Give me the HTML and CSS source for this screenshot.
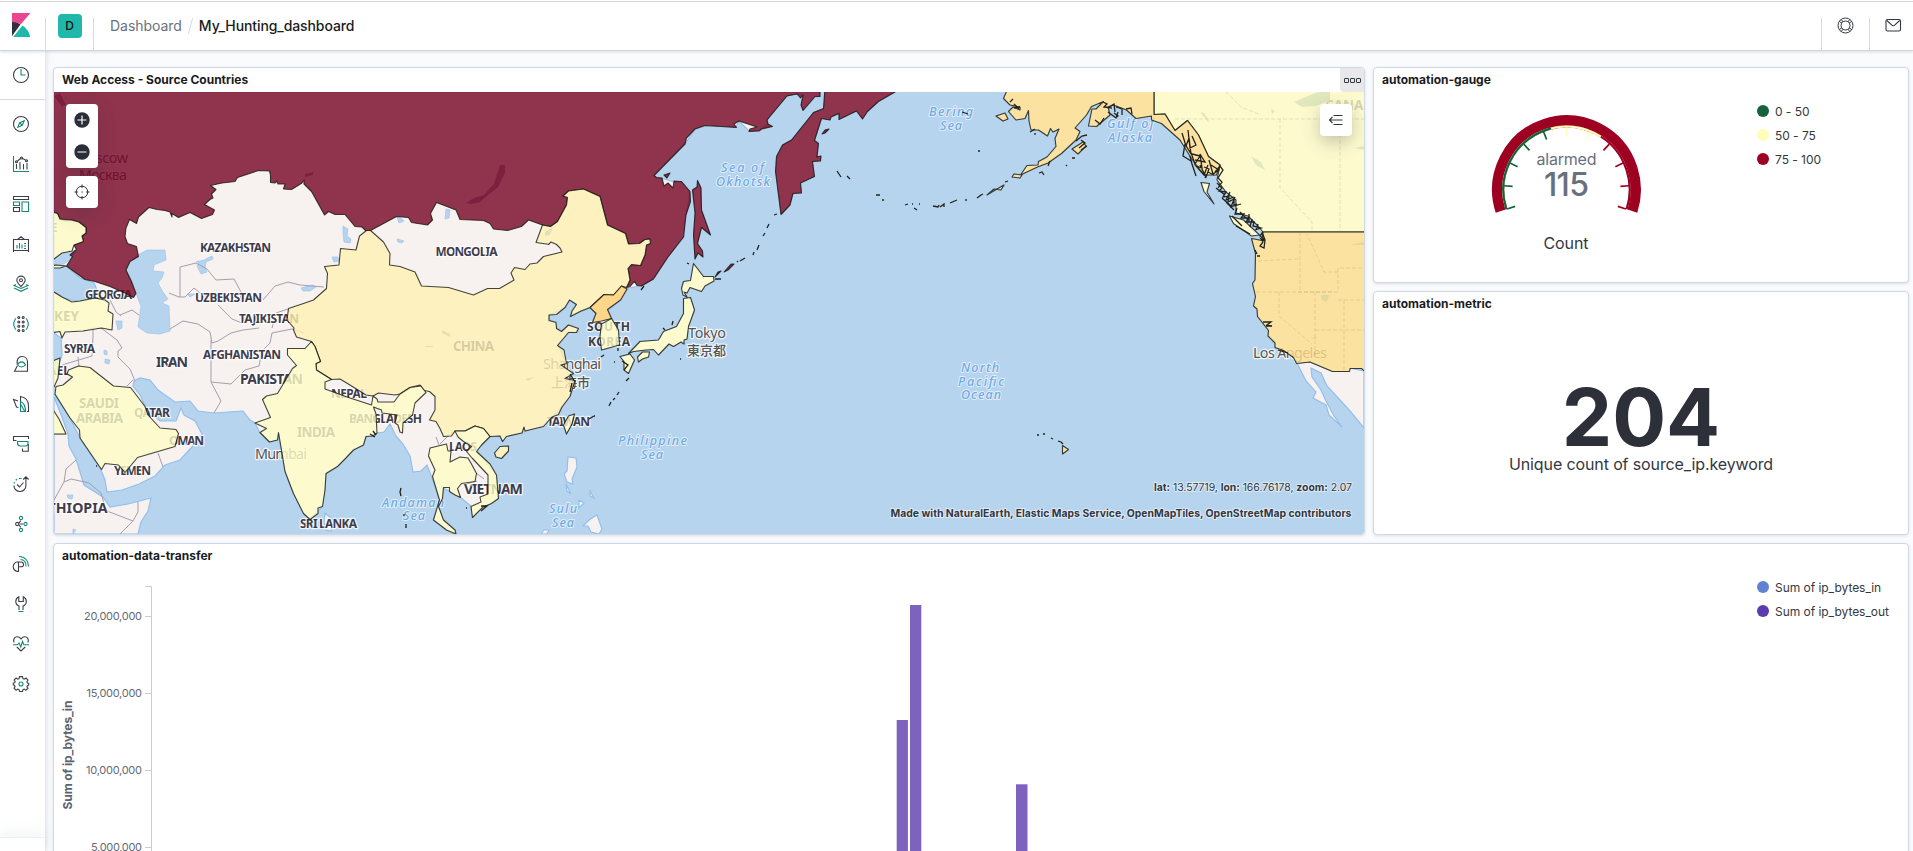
FILE: index.html
```html
<!DOCTYPE html>
<html lang="en">
<head>
<meta charset="utf-8">
<title>My_Hunting_dashboard</title>
<link rel="stylesheet" href="styles.css">
</head>
<body>
<header class="header">
  <div class="brand">
    <svg class="brand-logo" width="18" height="24" viewBox="0 0 18 24"><path fill="#2f313b" d="M0 8.500v14.500L8.500 11.500C6 9.600 3 8.500 0 8.500z"/><path fill="#e9478f" d="M0 0v9c3.200 0 6 .8 8.800 2.200L18.400 0z"/><path fill="#20b8aa" d="M10.400 12.600L1.200 24h17c-.8-4.600-3.600-8.800-7.800-11.400z"/></svg>
  </div>
  <div class="space"><span class="avatar">D</span></div>
  <nav class="crumbs"><a>Dashboard</a><i></i><b>My_Hunting_dashboard</b></nav>
  <div class="tools">
    <span class="tool"><svg width="17" height="17" viewBox="0 0 17 17" fill="none" stroke="#343741"><circle cx="8.500" cy="8.500" r="7.500"/><circle cx="8.500" cy="8.500" r="4.500"/><path d="M2.300 4.500l2.700 1.700M4.200 2.400l1.900 2.500M14.700 4.500L12 6.200M12.800 2.400l-1.900 2.500M2.300 12.500L5 10.800M4.200 14.600l1.900-2.500M14.700 12.500L12 10.800M12.800 14.600l-1.900-2.500"/></svg></span>
    <span class="tool"><svg width="17" height="17" viewBox="0 0 17 17" fill="none" stroke="#343741" stroke-width="1.100"><rect x="1" y="2.500" width="14.500" height="11.500" rx="1.500"/><path d="M1.800 3.500l5.400 4.800c.7.600 1.500.6 2.200 0L14.700 3.500"/></svg></span>
  </div>
</header>
<div class="shell">
  <aside class="side">
    <div class="side-recent"><svg class="ico" viewBox="0 0 16 16"><circle cx="8" cy="8" r="7.500"/><path class="g" d="M8 2v6h4.500"/></svg></div>
    <div class="side-list">
      <svg class="ico" viewBox="0 0 16 16"><circle cx="8" cy="8" r="7.500"/><path class="g" d="M11.200 4.800L9.300 9.300 4.800 11.200 6.700 6.700zM7 7l2 2"/></svg>
      <svg class="ico" viewBox="0 0 16 16"><path class="g" d="M.5 0v15.500H16"/><path d="M3.500 8v5M7 6v7.500M10.500 8v5.500M14 7v6.500M4.500 5l3-2.500M9.500 2.500l3 1.500"/><circle cx="3.500" cy="5.800" r="1"/><circle cx="8.500" cy="2" r="1"/><circle cx="13.500" cy="4.700" r="1"/></svg>
      <svg class="ico" viewBox="0 0 16 16"><path d="M.5.500h15v3H.5zM.5 11.500h6v4h-6z"/><path class="g" d="M.5 6h6v3.500h-6zM9 6h6.500v9.500H9z"/></svg>
      <svg class="ico" viewBox="0 0 16 16"><path d="M.5 3.500h15v11H.5zM4.500 3.500L8 .8l3.500 2.700M.5 14.500v1.500M15.500 14.500V16"/><path class="g" d="M4 9v3.500M6.500 7v5.500M9 8.500v4M11 7.500h2M11 10h2M11 12.500h2"/></svg>
      <svg class="ico" viewBox="0 0 16 16"><path d="M8 10.500C5.500 8 3.800 6.300 3.800 4.300a4.200 4.200 0 018.400 0c0 2-1.700 3.700-4.200 6.200z"/><circle cx="8" cy="4.300" r="1.500"/><path class="g" d="M3 8.500l-2 .9 7 3 7-3-2-.9M1 12l7 3.300L15 12"/></svg>
      <svg class="ico" viewBox="0 0 16 16"><circle cx="5.800" cy="1.500" r="1"/><circle cx="10.200" cy="1.500" r="1"/><circle cx="5.800" cy="6" r="1"/><circle cx="10.200" cy="6" r="1"/><circle cx="5.800" cy="10.200" r="1"/><circle cx="10.200" cy="10.200" r="1"/><circle cx="5.800" cy="14.500" r="1"/><circle cx="10.200" cy="14.500" r="1"/><path class="g" d="M3 2.500C1.500 3 2 5 .8 6.500v3c1.200 1.500.7 3.500 2.200 4M13 2.500c1.500.5 1 2.500 2.200 4v3c-1.200 1.500-.7 3.500-2.200 4"/></svg>
      <svg class="ico" viewBox="0 0 16 16"><path d="M4.200 8.500C3.400 3.500 5.500.5 9 .5c3.300 0 5.500 2.300 5.500 5.500v9.300H1.500l2.900-5.500"/><path class="g" d="M4.500 9c2-4.200 6-4.200 8 0-2.400 2.600-5.600 2.600-8 0z"/></svg>
      <svg class="ico" viewBox="0 0 16 16"><path d="M5.500 11.500L3.500 11 .5 3.500 5 5M7.500 5V.5c5 1 8 4.500 8 9v6H14"/><path class="g" d="M7.500 15.500V5.500c2.500 1 5 4 5 10z M7.500 8l4 7"/></svg>
      <svg class="ico" viewBox="0 0 16 16"><path d="M.5 5V.5h15V3M9.500 12.500v2.800h5.800V8M.5 4.500h3"/><path class="g" d="M4.500 5.500h10.500v2c0 1.500-1 2.500-2.500 2.500h-5c-2 0-3-1.500-3-3z"/></svg>
      <svg class="ico" viewBox="0 0 16 16"><path d="M12.900 1v8.500a5.900 5.900 0 01-12 0M10.200 3.500L12.900.8l2.700 2.700M4 8.500L6.500 11l4-4.500"/><path class="g" d="M1 7.500l.5-1.500M2.700 4.200L4 3.200M6 2.500h2.500"/></svg>
      <svg class="ico" viewBox="0 0 16 16"><circle cx="4.200" cy="8" r="1.600"/><path d="M6 7l1.800-2.300M6 9l1.800 2.300M6.500 8h3.500"/><circle class="g" cx="8" cy="2" r="1.600"/><circle class="g" cx="12.500" cy="8" r="1.600"/><circle class="g" cx="8" cy="14" r="1.600"/></svg>
      <svg class="ico" viewBox="0 0 16 16"><path d="M5.200 5.700a4.900 4.900 0 00-.2 9.800h.5V6h2.600a2.400 2.400 0 010 4.800H5.500"/><path class="g" d="M7.500 3.500c3.500 0 5.500 3 5.500 7M6 .5c6 0 9.500 4 9.500 10"/></svg>
      <svg class="ico" viewBox="0 0 16 16"><path d="M6 14V10C4 9.300 2.800 7.500 2.800 5.500c0-2 1-3.800 3-4.700V5.500h4.500V.8c2 .9 3 2.700 3 4.700 0 2-1.300 3.800-3.300 4.500v4"/><path class="g" d="M5.500 15.500h5"/></svg>
      <svg class="ico" viewBox="0 0 16 16"><path d="M1 6.500C-.2 2.500 2 .8 4.200.8 6 .8 7.200 1.800 8 3c.8-1.200 2-2.200 3.800-2.200C14 .8 16.200 2.500 15 6.500M3.800 11L8 15l4.200-4"/><path class="g" d="M0 8.800h4.500L6 7l1.800 4L9.500 5.500l1.300 3.300H16"/></svg>
      <svg class="ico" viewBox="0 0 16 16"><path d="M6.500.6h3l.4 2 1.400.6L13 2l2 2.100-1.100 1.600.6 1.300 1.200.2v2l-1.200.2-.6 1.500L15 12.200 12.900 14.200l-1.600-1.100-1.400.6-.4 1.800h-3l-.4-1.800-1.400-.6-1.600 1.100L1 12.200l1.100-1.500-.6-1.400L.3 9V7l1.300-.2.600-1.300L1 4.100 3.100 2l1.600 1.200 1.400-.6z"/><circle class="g" cx="8" cy="8" r="2"/></svg>
    </div>
    <div class="side-foot"></div>
  </aside>
  <main class="grid">
    <section class="panel panel-map">
      <h2>Web Access - Source Countries</h2>
      <button class="panel-menu"><i></i><i></i><i></i></button>
      <div class="map">
        <svg class="map-svg" viewBox="54 92 1310 442" preserveAspectRatio="none">
          <rect x="54" y="92" width="1310" height="442" fill="#b6d4ee"/>
          <!-- base land -->
          <g class="land">
            <path d="M54 92H820V97L815 97 804 110 801 105 803 95 797 94 787 96 767 120 768 124 760 130 749 131 739 121 736 127 705 126 695 129 685 144 654 176 674 182 682 182 690 192 686 215 684 237 668 257 653 279 641 286 628 288 621 300 608 310 612 318 618 330 619 345 602 350 600 336 601 324 592 322 596 313 590 308 570 316 576 305 570 300 565 308 549 315 549 320 556 322 557 328 562 331 568 325 578 328 576 332 568 332 558 345 566 363 574 374 566 379 575 381 570 396 558 411 543 426 523 432 506 436 503 442 500 436 490 437 482 445 477 451 496 475 498 498 491 504 483 507 472 517 471 506 460 497 449 491 443 488 442 499 439 507 443 520 455 530 455 534 446 530 433 520 439 500 437 493 432 478 427 465 421 471 413 472 410 456 403 444 396 436 390 424 384 432 377 433 366 437 363 445 353 450 337 467 326 474 325 490 322 507 310 519 303 513 293 493 285 471 281 450 278 433 277 440 269 442 260 433 255 423 250 420 243 411 214 413 198 411 190 401 175 402 158 390 150 380 140 378 134 381 133 386 140 395 147 410 160 421 176 421 181 408 184 415 195 421 202 434 191 448 180 460 165 465 155 476 139 484 122 490 107 492 105 480 101 470 80 438 70 418 54 394V372L57 370 62 355 61 338 54 333V292L64 298 80 302 92 298 97 290 94 283 80 278 66 266 54 264z"/>
            <path d="M54 397L62 417 68 434 69 446 76 459 84 485 95 492 103 497 110 507 128 504 151 498 148 511 141 522 138 534H54z"/>
            <path d="M1297 363L1310 362 1332 371H1349V368L1364 371V428L1350 411 1340 400 1327 386 1321 373 1311 368 1312 377 1321 390 1326 401 1334 416 1342 427 1329 415 1326 405 1313 398 1316 392 1306 381z"/>
            <path d="M325 513l8 7-2 11-5-1-2-8zM568 457l8 1 1 9-5 12 1 5-6-2-3-8 3-3zM589 520l8-5 5 14-3 5-8-2-3-6h-5zM544 530l5 0-2 4-6 0zM566 484l5 10-4-3zM579 500l5 3-5 5zM590 491l4 7-4-2z"/>
            <use href="#kamchatka"/><use href="#japan"/><use href="#canada"/><use href="#usa"/><use href="#alaska"/><use href="#taiwan"/><use href="#hainan"/>
          </g>
          <g fill="#b6d4ee" stroke="#93bfee" stroke-width=".6">
            <path d="M138 255L147 250 165 250 166 260 154 265 153 271 164 272 162 278 158 283 163 292 168 299 162 303 169 306 170 331 160 334 147 333 138 327 141 306 138 299 136 293 126 270 130 262z"/>
            <path d="M55 258L60 254 72 251 76 250 72 258 64 264 56 265z"/>
            <path d="M343 226l5 3-1 7 4 3-1 4-6-1-1-9zM332 257l6 0 1 4-5 1zM196 262l8-2 8-4 1 3-7 3-1 6 2 4-6 2-4-8 2-5zM187 294l8 0-5 3zM301 288l12-3 3 2-6 4-7 0zM116 321l6 0 0 7-4 2zM104 350l3 1 0 4-3-1zM105 359l5 1-1 4-4-1zM397 239l7 2-2 2-4-1zM397 217l3 0 4 4-5 2zM446 209l4 1-1 8-4 1zM67 495l6 0-1 4-4-1zM73 529l3 1-3 4z"/>
          </g>
          <g fill="#9a84a6" opacity=".9"><path d="M500 165h5l0 8-7 14-10 8-8 7-9 2-5-1 8-5 10-3 10-11zM54 96l6-3 6 12-4 2zM305 174l8-2 0 3-8 2z"/></g>
          <!-- administrative borders -->
          <g fill="none" stroke="#a39eae" stroke-width="1">
            <path d="M180 297V267L196 263 207 269 216 280 234 279 241 292 240 301M169 293l10 4h6l9-9 10 8 14 0M263 300l12-14 13-4 12 3 24 2M170 329l13-8 15 3 12 8 2 11 6-2 13-8 12-3 16-2M211 340v42l10 19-7 12M211 382l20 2 14-14 14-4 3-15 8-8 2-10 20-4 12 4M83 331l10-3 0 8-1 20-30 9M79 366l-1-9M95 328l6 0 16 12 5 8-4 3 0 6 12 12 5 12M127 386l6-6M158 453l5 14M54 434h12M64 482l7-3 18 4 12 10M54 500l10-18 2-13 10-9M101 493l4 14 2 4 26 10-13 13M138 502v10l-5 9M110 300l6 12 5 4M120 315l12-5 7 5M218 305l14 14 10 4M272 328l4-15 12-4 6 10"/>
            <path d="M436 437l3 8M440 444l10-10 4-2M463 485l14-4M476 473l8 6" />
          </g>
          <g class="map-labels">
            <g class="country">
              <text x="200" y="252" textLength="71">KAZAKHSTAN</text><text x="85" y="299" textLength="47">GEORGIA</text><text x="195" y="302" textLength="67">UZBEKISTAN</text><text x="239" y="323" textLength="60">TAJIKISTAN</text>
              <text x="64" y="352.500" textLength="31">SYRIA</text><text class="lg" x="156" y="367" textLength="32">IRAN</text><text x="203" y="359" textLength="78">AFGHANISTAN</text><text class="lg" x="240" y="383.500" textLength="63">PAKISTAN</text><text x="331" y="398" textLength="36">NEPAL</text>
              <text class="md" x="79" y="407.500" textLength="40">SAUDI</text><text class="md" x="76" y="423" textLength="47">ARABIA</text><text x="134" y="417" textLength="36">QATAR</text><text x="169" y="445" textLength="35">OMAN</text><text x="114" y="474.500" textLength="37">YEMEN</text>
              <text class="md" x="297" y="437" textLength="38">INDIA</text><text x="349" y="422.500" textLength="73">BANGLADESH</text><text class="lg" x="107.500" y="512.500" text-anchor="end">ETHIOPIA</text><text x="300" y="528" textLength="57">SRI LANKA</text><text class="md" x="79" y="321" text-anchor="end">TURKEY</text><text x="70" y="374.500" text-anchor="end">ISRAEL</text><text x="57.500" y="232" text-anchor="end">UKRAINE</text>
              <text class="md" x="453" y="350.500" textLength="41">CHINA</text><text x="435.500" y="256" textLength="62">MONGOLIA</text><text x="587" y="330.500" textLength="43">SOUTH</text><text x="588" y="346" textLength="42">KOREA</text><text x="547" y="425.500" textLength="43">TAIWAN</text><text x="449" y="451" textLength="28">LAOS</text><text class="lg" x="464" y="494" textLength="59">VIETNAM</text><text class="md" x="1325" y="110">CANADA</text>
            </g>
            <g class="city">
              <text x="75" y="163" textLength="53">Moscow</text><text x="79" y="180" textLength="48">Москва</text><text x="255" y="459" textLength="52">Mumbai</text><text x="543" y="369" textLength="58">Shanghai</text><text class="cjk" x="551" y="387" textLength="39">上海市</text><text x="688" y="337.500" textLength="38">Tokyo</text><text class="cjk" x="687" y="355" textLength="39">東京都</text><text x="1253" y="358" textLength="74">Los Angeles</text>
            </g>
            <g class="sea">
              <text x="721" y="172" textLength="43">Sea of</text><text x="716" y="185.500" textLength="54">Okhotsk</text><text x="618" y="445" textLength="69">Philippine</text><text x="641" y="458.500" textLength="22">Sea</text><text x="549" y="512.500" textLength="28">Sulu</text><text x="552" y="526.500" textLength="22">Sea</text><text x="382" y="506.500" textLength="62">Andaman</text><text x="403" y="520" textLength="22">Sea</text><text x="929" y="116" textLength="44">Bering</text><text x="940" y="129.500" textLength="22">Sea</text><text x="1107" y="127.500" textLength="47">Gulf of</text><text x="1108" y="141.500" textLength="44">Alaska</text><text x="961" y="371.500" textLength="38">North</text><text x="958" y="385.500" textLength="46">Pacific</text><text x="961" y="399" textLength="40">Ocean</text>
            </g>
          </g>
          <!-- choropleth layer -->
          <g class="fill">
            <g fill="#760324">
              <path d="M50 88H820V96.500L815 96.500 803 110.500 801 105 803 95 800.500 98 797 94 787 96 767 120 768 124 772.500 126.500 761.700 129 759 131 749 131.500 750 129 757 127 739 121 734 124 736.500 127.500 705 125.500 695 129 686.500 138 685 144 654 175.500 656.500 177.500 662 178 664 186 668 183 673 188 674 181 681.500 181.500 690 191.500 690.500 201.500 686 215 683.500 237 668 257 653.500 279 641.500 286 637 285.500 634.500 281.500 630 286.500 626.500 287.500 630 280 628 268.500 631.500 264.500 640.500 265.500 645 255 646.500 245 650.500 243.500 650 239 645 239.500 639.500 243.500 628.500 244 625.500 233.500 607.500 225 600 196.500 583.500 189 568.500 191 563 196 567.500 197.500 566.500 205 557.500 221.500 550.500 226.500 542.500 225 528.500 220 521.500 226.500 507.500 230.500 493.500 229 490 223.500 483.500 220.500 460 219.500 456 210 436.500 202.500 430.500 213.500 432.500 220 427.500 225 411.500 222.500 408.500 217.500 396.500 216.500 370.500 230.500 365.500 230.500 362 227 355 226.500 345 214.500 335 214.500 328.500 211.500 324.500 215 311.500 191.500 304 184 304 180 302 183 291.500 189.500 283.500 189 285 184 278 184 277 181 275 183 270.500 182.500 270.500 175 269.500 171 258.500 170.500 237.500 177.500 235 181.500 222 183 210.500 185.500 216 189.500 211.500 194 213 198 210 199.500 204.500 204.500 214.500 210 212.500 214.500 201.500 218.500 190 212.500 178.500 217.500 172 213.500 172 217 170 212 165 210.500 157 209.500 149 207.500 138.500 217 136.500 223.500 129.500 219.500 126 228 125 236.500 127.500 243.500 136.500 246.500 138.500 256.500 130 261.500 126 270 131.500 281.500 136 293.500 133.500 297.500 125 293 110 286.500 95 281.500 85 279.500 66.500 266 72.500 256.500 70 255 76.500 249.500 74 245 83.500 241.500 82 236 86 233 86 227.500 79 222 71.500 220 65 221 60 219 57.500 213.500 50 211z"/>
              <path id="kamchatka" d="M825 88L823.500 108.500 813.500 112.500 791.500 140 782.500 145 776.500 156.500 775.500 171.500 781 214.500 790 205 793 193.500 801.500 193 800.500 183 814.500 176.500 812.500 161.500 820.500 161 821 156 817 157 818.500 143.500 814.500 140.500 821.500 118.500 830 120 831 117 839 113.500 839 119.500 856.500 111 862.500 119 867.500 111.500 878.500 101.500 895 92 900 88zM697.500 180.500L701 188 701.500 210 710.500 235 701.500 227.500 697.500 243.500 702.500 251 703 257 698 253 695 259 693.500 235 695 213 692.500 190 697 187z"/>
              <path d="M822 134l3-4 4-1-4 4zM664 175l6-2-3 5zM724 272l7-8 3 0-6 6zM715 277l3-5 3-1z"/>
            </g>
            <g fill="#fff0b4">
              <path d="M370.500 230.500L383.500 242 390 253.500 389.500 265 400 266.500 415 272 421.500 286 448.500 287.500 473.500 295 487.500 288.500 499.500 288.500 514 280 511 273 514.500 267.500 525 269.500 530 264 537 263 543.500 256.500 562 252 560 248 556.500 244.500 551 242 548.500 244.500 546.500 244 536 242.500 542.500 225 550.500 226.500 557.500 221.500 566.500 205 567.500 197.500 563 196 568.500 191 583.500 189 600 196.500 607.500 225 625.500 233.500 628.500 244 639.500 243.500 645 239.500 650 239 650.500 243.500 646.500 245 645 255 640.500 265.500 631.500 264.500 628 268.500 630 280 626.500 287.500 621.500 286 613.500 295 604 294.500 590 307.500 581 311 570.500 316.500 572 311 576.500 304.500 569.500 300 565 307.500 556.500 314.500 549 315 549 320.500 556 322.500 556.500 328.500 561.500 331.500 568.500 325 578.500 328.500 576.500 332.500 568.500 332.500 563.500 338.500 557.500 345.500 564 350 566.500 363.500 561 365 573.500 373.500 565 378.500 575 380.500 570 396.500 562 407 558.500 414.500 552 417 543.500 426.500 525 431 524 427 522 433 506.500 436.500 502.500 441.500 500 436 490 436.500 483.500 428.500 475 426 465 431 455 431 451.500 436 443.500 436.500 440 428.500 436 421.500 429.500 420 435 410 435 396.500 429.500 391.500 424 390.500 420 385 410 387.500 400 394 395 395 378.500 393 373 396 366 395 350 385 340 379 331.500 379.500 316.500 370 316 363.500 320.500 361.500 315 346.500 311.500 341.500 296.500 337 293.500 330 294 328 287 320 288.500 308.500 303.500 303.500 313.500 300 326.500 288.500 327.500 273.500 324.500 266.500 339 265 340.500 248.500 356 250 359.500 236 366.500 230.500z"/>
              <path id="hainan" d="M494.500 453L500 446.500 508.500 446 508.500 451 501.500 458.500 496 457z"/>
            </g>
            <g fill="#fefcc5">
              <path d="M255 423L270.500 417.500 262.500 399.500 266.500 396 277.500 393.500 292.500 368.500 296.500 365.500 287.500 355V348.500H305L311.500 341.500 315 346.500 320.500 361.500 316 363.500 316.500 370 331.500 379.500 325 382 325 389 350 398 371.500 405 373 396 377 399 378 402H394L400 394 410 387.500 421 386 426 392.500 415 403 412.500 415 403 423 402.500 433 400 432 398 425 395 423 397 415 382 413 381.500 410 373.500 407 376 414 377 433 373 436 366 436.500 363.500 445 353.500 450 345 459 337.500 466.500 326 473.500 325 490 322.500 506.500 318 508 318 513.500 310 519.500 303.500 513.500 293.500 493.500 285 471.500 281.500 450 278.500 432.500 277.500 440 269.500 442 260 432.500 266.500 428.500z"/>
              <path d="M68.500 370L78.500 366 90 367.500 113.500 386 130.500 387.500 137 396 145 406.500 148 415 160 428 176 429.500 178.500 433.500 175 446.500 137.500 457.500 125 472.500 118.500 465 105 463.500 101.500 469.500 80 438 79.500 430 70 418 55 394 56 386.500 63 385 72.500 377 67 374z"/>
              <path d="M50 211L57.500 213.500 60 219 71.500 220 79 222 86 227.500 86 233 82 236 83.500 241.500 74 245 72 251 62 253 54 259H50zM50 266l6-1 10 1-6 2-10 0zM50 290L54 292 62 297 72 302 80 301 95 298 105 300 109 303 108 311 113 314 112 330 101.500 328 83 331 65 332 62 338 60 331.500 50 333zM50 362l10-4-2 20-4 9-4 0zM50 405L59 419 66 434H50z"/>
              <path d="M430 448L446.500 444 448 451 451 451 450 462 460 457 468 458 472 465 476.500 473.500 475 481.500 461.500 483.500 457.500 488.500 460.500 497.500 455 495 449.500 491.500 449.500 487.500 443.500 487.500 442.500 498.500 438.500 506.500 443.500 520 455 530 456 534 446.500 530 433.500 520 439.500 500 432.500 476.500 435 470 428.500 456z"/>
              <path d="M455 431L465 431 475 426 483.500 428.500 490 436.500 481.500 445 476.500 451.500 490 464 496.500 475 498.500 498.500 491.500 503.500 483 507 472.500 517.500 471 506.500 481 502 480 497 488 494 488 475 472.500 458.500 466.500 451.500 471.500 446.500 463.500 441.500 458 437z"/>
              <path id="taiwan" d="M568.500 416L574.500 414 572 424 566.500 434 563.500 425z"/>
              <path d="M601.500 324L611.500 318.500 618.500 330 619.500 345 601.500 350 600 336.500z"/>
              <path id="japan" d="M693.500 263.500L703.500 276.500 713.500 276.500 714 281 705 286 701.500 291.500 690 287.500 687 293 684 292 687 297 683 295 681.500 288.500 683.500 281.500 690.500 280.500zM683.500 298.500L690.500 297.500 694.500 310 688.500 326.500 687 339 684 340 684 344 681 342 673.500 346.500 669 344 658.500 355 653.500 349.500 646 350 633.500 351.500 628.500 353.500 640 341.500 658.500 340 663.500 331.500 676.500 326.500 683.500 313.500zM637.500 357l5-5 7 0-1 5-6 2-4 3zM620 356.500L630 354 634.500 360 628.500 373.500 624 370 624 361.500z"/>
              <path id="canada" d="M1154 88V114.500L1165 114 1175 130.500 1187.500 120.500 1198.500 135 1208.500 156.500 1220 165 1217 180 1226 192 1236 200 1236 213 1248 216 1258 226 1263 232H1368V88zM1229.500 216L1243.500 220 1259.500 235 1251.500 236 1233.500 223.500zM1201 182.500L1209.500 183.500 1207 192 1214 204 1204 191.500z"/>
            </g>
            <path fill="#fece70" d="M590 307.500L604 294.500 613.500 295 621.500 286 627 289 620.500 300 607.500 309.500 611.500 318.500 601.500 321 592.500 322.500 596 313.500z"/>
            <g fill="#fcdd8c">
              <path id="usa" d="M1263 232H1368V374L1361.500 368.500H1350L1349.500 371.500H1332.500L1310 362 1296.500 363.500 1293.500 357.500 1283.500 350.500 1275 347.500 1275 343 1268 336 1268.500 330.500 1261.500 321.500 1257.500 316.500 1257 309 1253.500 306 1255.500 296.500 1252.500 283.500 1255 280 1255.500 253.500 1251.500 238.500 1262 240.500z"/>
              <path id="alaska" d="M1008 88L1003.500 98.500 1010 105 1020 107 1020 110 1013 107 1008.500 111.500 1016 120 1025 118.500 1028.500 110.500 1029 121 1031 130 1038.500 130 1047.500 136 1050.500 128.500 1053 132 1059 129 1055 138.500 1056 146.500 1047 157 1038.500 161.500 1038 165 1027 165.500 1020.500 175 1037.500 167 1048 163 1061.500 153.500 1076 140 1080 131.500 1075 128 1086.500 115 1091.500 106.500 1103.500 101.500 1096 109 1092 109 1088.500 126 1096.500 126.500 1110 115 1108 107 1113.500 105 1126.500 110 1136 118.500 1151.500 116 1151.500 120 1161.500 123.500 1180 140 1191.500 158.500 1200 170 1205 175 1216.500 175 1220 165 1208.500 156.500 1198.500 135 1187.500 120.500 1175 130.500 1165 114 1154 114.500V88zM996 116l9-3 3 6-5 2zM1012 177l2-3 8 1-2 3zM1072 149l11-7 3 4-8 8zM987 195l7-6 7 1 3-5-7 4zM1062.500 445.500l6 4-6 4.500z"/>
            </g>
          </g>
          <g class="coast">
            <path d="M774 215l3-1M769 224l-2 4M765 233l-2 3M759 245l-2 5M754 252l-1 3M745 258l-5 3M738 261l-1 1M837 171l4 6M847 176l3 3M876 195l4 0M882 200l2 0M905 205l3-1M912 204l1 0M914 208l3 2M919 204h1M933 206l5 1 1-2M940 207l4-3 0 3M950 203l7-3M966 201v-2M977 198l4-3 2-1M978 151l2 0M962 112l6 2M1005 182l3-1M1039 173l3-1 2 3M1048 166l2-5M1035 133v2M1066 165l1 1M1076 141l6-5 5-1M1081 150l6-4M1072 158h3M601 357l3-2M614 362h1M629 378l-3 3M619 392l-2 3M615 398l-2 2M611 402l-2 4M589 419l5-3M594 416h1M680 359h1M715 279h6M689 264l-2-1M673 321l-1 4M663 328l2 2M618 348v3M641 290l3-4M401 488l-1 4 1 4M404 514v2M406 524l0 4M96 466h1M1037 435l2 0M1043 434l2 0M1051 438l2 1M1058 441l3 1 2 2"/>
            <path d="M1103 102l4 2-3 3 8 1M1109 107l5-3 1 8M1116 107l6 2 0 6M1126 109l5-1 1 6M1114 113l4 3-3 2M1095 120l5 4 4-6M1010 102l3-3M1014 108l6-1M1030 132l5-3M1014 104l5 5M1081 140l4 3-6 5M1108 112l8 6 2-6"/>
            <path d="M1182 133l4 13 3-8 2 16-6-10-2 12 8 5M1188 130l2 18 6-3-4-9M1190 150l5 14 5-8-8-2M1195 160l10 2-5-8 2 14-6-2 8 9 4-10M1200 165l6 12 3-8-5-2M1209 160l4 14 6-4-8-5M1215 172l5-6 3 4-5 8 4 4-4 6M1190 156l2 8 4 12M1205 178l3-6 6 3M1217 183l5 5-3 3 7 1-3 5 6-1-1 6 6-3 0 7 7-2M1216 188l9 7M1222 198l9 8M1226 202l8 8M1230 192l-4 8 8-3M1235 197l-4 10 6-3M1237 208l-2 6 9 0-3 4 8 0-3 4 8 0-1 4 8 2-6 2M1240 212l8 8M1249 214l0 8M1252 219l-2 8M1258 224l-2 6M1232 216l10 10M1236 226l14 8M1263 232l-3 4 5 4-1 8-4-2 3-4-2-3 4 2M1257 256h3M1255 250l2 4M1263 322l8 0-4 3 5 1-6 0M1278 350l10 3M1262 232l3 8"/>
            <path d="M481 506l6 0-6 5M466 508h1M370 434l5 3M373 431l3 4M622 361l6 4-4 5M570 374l5 8M572 383l-2 9"/>
          </g>
          <g fill="none" stroke="#9b946a" opacity=".25" stroke-dasharray="4 2"><path d="M1175 119H1364M1280 119V188L1312 222V232M1340 122V232M1226 92l15 15 20 8M1300 232V292M1258 261l40-2M1298 292H1338V268H1364M1279 292V316L1312 344M1256 292h78M1315 292v64M1315 330h49M1344 300v71M1306 232l18 40 14 0M1338 300h26"/></g>
          <g fill="#a7bd95" opacity=".3"><path d="M1294 102l14-6 10-4 12 0 0 8-14 6-14 1zM1200 112l4 1 5 8-1 1zM1251 156l10 6 4 8-9-5zM1271 109l4 2-3 3zM1321 295l8 0-2 7-5-2zM1275 239l8 4zM1350 245l14-3 0 3zM1310 338l8-1-2 2zM442 330l8 4 0 3-8-4zM525 379l9-2-6 4zM545 232l8-5-3 8-5 1zM425 346h8v1h-8zM1355 148l9-2v4z"/></g>
          <g class="attr"><text x="1154" y="491" textLength="198"><tspan>lat:</tspan> 13.57719, <tspan>lon:</tspan> 166.76178, <tspan>zoom:</tspan> 2.07</text><text x="890.500" y="517" textLength="461"><tspan>Made with NaturalEarth, Elastic Maps Service, OpenMapTiles, OpenStreetMap contributors</tspan></text></g>
        </svg>
        <div class="zoom-box">
          <svg width="16" height="16" viewBox="0 0 16 16"><circle cx="8" cy="8" r="7.700" fill="#2b2e38"/><path d="M3.500 8h9M8 3.500v9" stroke="#fff" stroke-width="1.200"/></svg>
          <svg width="16" height="16" viewBox="0 0 16 16"><circle cx="8" cy="8" r="7.700" fill="#2b2e38"/><path d="M3.500 8h9" stroke="#fff" stroke-width="1.200"/></svg>
        </div>
        <div class="locate"><svg width="16" height="16" viewBox="0 0 16 16" fill="none" stroke="#343741"><circle cx="8" cy="8" r="5.800"/><path d="M8 .5v3.500M8 12v3.500M.5 8H4M12 8h3.500M7.300 8h1.400"/></svg></div>
        <div class="layers"><svg width="16" height="14" viewBox="0 0 16 14" fill="none" stroke="#343741" stroke-width="1.100"><path d="M5.500 2.500h9M1.500 7h13M5.500 11.500h9M4.500 4L1.500 7l3 3"/></svg></div>
      </div>
    </section>
    <section class="panel">
      <h2>automation-gauge</h2>
      <div class="gauge-body">
        <svg class="gauge" width="360" height="180" viewBox="1387 92 360 180">
          <g fill="none" transform="rotate(162 1566.500 189.700)">
            <circle cx="1566.500" cy="189.700" r="69.300" stroke="#9e0022" stroke-width="10.300" pathLength="360" stroke-dasharray="216 360"/>
            <circle cx="1566.500" cy="189.700" r="63.200" stroke="#9e0022" stroke-width="2.200" pathLength="360" stroke-dasharray="216 360"/>
            <circle cx="1566.500" cy="189.700" r="63.200" stroke="#fffdb8" stroke-width="2.200" pathLength="360" stroke-dasharray="140.900 360"/>
            <circle cx="1566.500" cy="189.700" r="63.200" stroke="#14633a" stroke-width="2.200" pathLength="360" stroke-dasharray="93.900 360"/>
          </g>
          <g stroke-width="1.700" stroke="#14633a">
            <path d="M1504 189.700h8.500" transform="rotate(-18 1566.500 189.700)"/><path d="M1504 189.700h8.500" transform="rotate(3.600 1566.500 189.700)"/><path d="M1504 189.700h8.500" transform="rotate(25.200 1566.500 189.700)"/><path d="M1504 189.700h8.500" transform="rotate(46.800 1566.500 189.700)"/><path d="M1504 189.700h8.500" transform="rotate(68.400 1566.500 189.700)"/>
            <g stroke="#fffdb8"><path d="M1504 189.700h8.500" transform="rotate(90 1566.500 189.700)"/><path d="M1504 189.700h8.500" transform="rotate(111.600 1566.500 189.700)"/></g>
            <g stroke="#9e0022"><path d="M1504 189.700h8.500" transform="rotate(133.200 1566.500 189.700)"/><path d="M1504 189.700h8.500" transform="rotate(154.800 1566.500 189.700)"/><path d="M1504 189.700h8.500" transform="rotate(176.400 1566.500 189.700)"/><path d="M1504 189.700h8.500" transform="rotate(198 1566.500 189.700)"/></g>
          </g>
          <text class="g-label" x="1566.500" y="165" textLength="60">alarmed</text>
          <text class="g-value" x="1566.500" y="195.500" textLength="45">115</text>
          <text class="g-title" x="1566" y="248.500" textLength="45">Count</text>
        </svg>
        <ul class="legend"><li><i class="c-low"></i>0 - 50</li><li><i class="c-mid"></i>50 - 75</li><li><i class="c-high"></i>75 - 100</li></ul>
      </div>
    </section>
    <section class="panel">
      <h2>automation-metric</h2>
      <div class="metric"><strong>204</strong><span>Unique count of source_ip.keyword</span></div>
    </section>
    <section class="panel panel-chart">
      <h2>automation-data-transfer</h2>
      <div class="chart-body">
        <svg class="chart" width="1700" height="283" viewBox="54 568 1700 283">
          <path d="M145 586.500h6.500V851M145 616.500h6.500M145 693.500h6.500M145 770.500h6.500M145 847.500h6.500" fill="none" stroke="#ccc"/>
          <g class="ticks"><text x="84" y="620" textLength="58">20,000,000</text><text x="86.500" y="697" textLength="55.500">15,000,000</text><text x="86" y="774" textLength="56">10,000,000</text><text x="91" y="851" textLength="51">5,000,000</text></g>
          <text class="axis" transform="translate(72 809.500) rotate(-90)" textLength="109">Sum of ip_bytes_in</text>
          <g fill="#7d62be"><rect x="896.700" y="720" width="11.200" height="131"/><rect x="910" y="605" width="11.300" height="246"/><rect x="1016" y="784.300" width="11.500" height="67"/></g>
        </svg>
        <ul class="legend"><li><i class="c-in"></i>Sum of ip_bytes_in</li><li><i class="c-out"></i>Sum of ip_bytes_out</li></ul>
      </div>
    </section>
  </main>
</div>
</body>
</html>
```

FILE: styles.css
```css
* { box-sizing: border-box; }
body { margin: 0; height: 851px; overflow: hidden; background: #fafbfd; font-family: Inter, "Liberation Sans", sans-serif; color: #343741; display: flex; flex-direction: column; }
.header { height: 51px; flex: none; display: flex; align-items: flex-end; background: #fff; border-bottom: 1px solid #cdd5e3; box-shadow: 0 1px 3px rgba(152, 162, 179, .35); position: relative; padding-top: 1px; }
.header::before { content: ""; position: absolute; left: 0; right: 0; top: 1px; height: 1px; background: #d3d4d6; }
.brand { width: 46px; height: 32px; border-right: 1px solid #d3dae6; position: relative; }
.brand-logo { position: absolute; left: 12px; top: -5px; }
.space { width: 48px; height: 32px; border-right: 1px solid #d3dae6; display: flex; justify-content: center; align-items: flex-start; }
.avatar { width: 24px; height: 24px; margin-top: -4px; border-radius: 4px; background: #20b8aa; color: #111; font-size: 12px; font-weight: 500; line-height: 24px; text-align: center; }
.crumbs { display: flex; align-items: center; height: 49px; margin-left: 16px; font-size: 14px; }
.crumbs a { color: #6a717d; letter-spacing: -.04px; }
.crumbs b { color: #1a1c21; font-weight: 500; letter-spacing: -.1px; }
.crumbs i { width: 1px; height: 16px; margin: 0 8px; background: #d3dae6; transform: rotate(15deg); }
.tools { margin-left: auto; display: flex; }
.tool { width: 48px; height: 32px; border-left: 1px solid #d3dae6; display: flex; justify-content: center; }
.tool:last-child { width: 44px; padding-left: 3px; }
.tool svg { flex: none; margin-top: -1px; }
.tool:first-child svg { margin-left: -1px; }
.shell { flex: 1; display: flex; min-height: 0; }
.side { width: 46px; flex: none; background: #fff; border-right: 1px solid #e6eaf1; box-shadow: 1px 0 4px rgba(152, 162, 179, .25); display: flex; flex-direction: column; }
.side-recent { height: 49px; border-bottom: 1px solid #d3dae6; padding: 16px 0 0 13px; }
.side-list { flex: 1; display: flex; flex-direction: column; gap: 24px; padding: 16px 0 0 13px; }
.ico { display: block; flex: none; width: 16px; height: 16px; fill: none; stroke: #3c3f49; stroke-width: 1.1; overflow: visible; }
.ico .g { stroke: #17877c; }
.side-foot { height: 14px; border-top: 1px solid #eef0f4; box-shadow: 0 -6px 12px rgba(152, 162, 179, .1); }
.grid { flex: 1; display: grid; grid-template-columns: 1312px 536px; grid-template-rows: 216px 244px 330px; gap: 8px; padding: 16px 0 0 7px; }
.panel { position: relative; background: #fff; border: 1px solid #d0d8e5; border-radius: 4px; box-shadow: 0 1px 3px rgba(152, 162, 179, .3); overflow: hidden; display: flex; flex-direction: column; min-width: 0; }
.panel-map { grid-row: span 2; }
.panel-chart { grid-column: span 2; }
h2 { margin: 0; flex: none; height: 24px; padding-left: 8px; line-height: 24px; font-size: 12px; font-weight: 700; color: #1a1c21; }
.panel-menu { position: absolute; right: 0; top: 0; width: 24px; height: 24px; border: 0; padding: 0; background: #e8e8ea; border-radius: 0 0 0 4px; display: flex; gap: 1px; justify-content: center; align-items: center; }
.panel-menu i { width: 5px; height: 5px; border: 1px solid #343741; border-radius: 1px; }
.map { position: relative; flex: 1; min-height: 0; }
.map-svg { display: block; width: 100%; height: 100%; }
.land { fill: #f7f2ef; stroke: #93bfee; stroke-width: 1.2; }
.map-labels text { paint-order: stroke; stroke: rgba(255, 255, 255, .75); stroke-width: 2.5px; stroke-linejoin: round; font-family: "Noto Sans", sans-serif; }
.country text { font-weight: 700; font-size: 12.1px; fill: #3d3c4d; }
.country .md { font-size: 13.5px; }
.country .lg { font-size: 14.2px; }
.city text { font-size: 14.4px; fill: #555; }
.city .cjk { font-family: "Noto Sans CJK JP", sans-serif; font-size: 13px; font-weight: 500; }
.sea text { font-size: 12.5px; font-style: italic; font-weight: 500; fill: #70aae6; stroke: rgba(255, 255, 255, .6); stroke-width: 2px; }
.fill { fill-opacity: .8; stroke: #16160f; stroke-opacity: .8; stroke-width: 1.1; stroke-linejoin: round; }
.coast { fill: none; stroke: #22221a; stroke-width: 1.3; }
.attr text { font-size: 10.5px; fill: #343741; paint-order: stroke; stroke: rgba(255, 255, 255, .5); stroke-width: 2px; }
.attr tspan { font-weight: 700; }
.zoom-box, .locate, .layers { position: absolute; left: 12px; width: 32px; background: #fff; border-radius: 4px; display: flex; flex-direction: column; align-items: center; box-shadow: 0 6px 18px rgba(52, 55, 65, .28); }
.zoom-box { top: 12px; height: 64px; justify-content: space-around; }
.locate { top: 84px; height: 32px; justify-content: center; }
.layers { left: auto; right: 12px; top: 12px; height: 32px; justify-content: center; }
.gauge-body, .chart-body { display: flex; }
.gauge { margin-left: 13px; flex: none; }
.gauge text { text-anchor: middle; }
.g-label { font-size: 16px; fill: #69707d; }
.g-value { font-size: 32px; fill: #69707d; font-weight: 500; }
.g-title { font-size: 16px; fill: #343741; }
.legend { list-style: none; margin: 0; padding: 7px 0 0 10px; font-size: 12px; letter-spacing: -.04px; white-space: nowrap; }
.legend li { display: flex; align-items: center; height: 24px; }
.legend i { width: 12px; height: 12px; border-radius: 50%; margin-right: 6px; }
.c-low { background: #14633a; }
.c-mid { background: #fffdb8; }
.c-high { background: #9e0022; }
.c-in { background: #6082d3; }
.c-out { background: #5a3bb0; }
.metric { display: flex; flex-direction: column; align-items: center; padding-top: 61px; }
.metric strong { font-size: 80px; line-height: 80px; font-weight: 700; color: #2d2f39; }
.metric span { font-size: 16px; line-height: 20px; margin-top: -3px; letter-spacing: -.12px; }
.chart { flex: none; }
.chart-body .legend { padding: 7px 0 0 3px; }
.ticks text { font-size: 11px; fill: #646a77; }
.axis { font-size: 12px; font-weight: 700; fill: #5c6370; }
```
